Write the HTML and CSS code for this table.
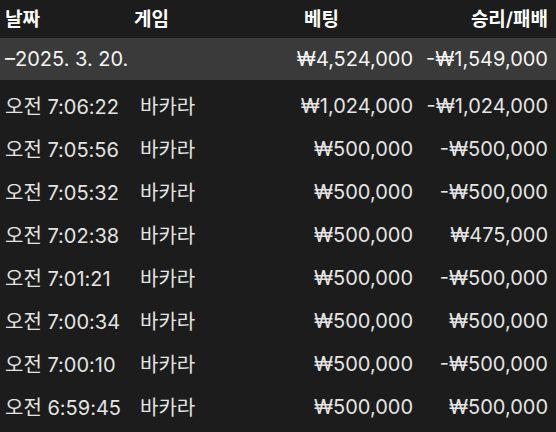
FILE: index.html
```html
<!DOCTYPE html>
<html lang="ko">
<head>
<meta charset="utf-8">
<link rel="stylesheet" href="styles.css">
</head>
<body>
<div class="table">
  <div class="row head">
    <div class="c date">날짜</div>
    <div class="c game">게임</div>
    <div class="c bet">베팅</div>
    <div class="c win">승리/패배</div>
  </div>
  <div class="row summary">
    <div class="c date">–2025. 3. 20.</div>
    <div class="c game"></div>
    <div class="c bet">₩4,524,000</div>
    <div class="c win">-₩1,549,000</div>
  </div>
  <div class="row"><div class="c date">오전 7:06:22</div><div class="c game">바카라</div><div class="c bet">₩1,024,000</div><div class="c win">-₩1,024,000</div></div>
  <div class="row"><div class="c date">오전 7:05:56</div><div class="c game">바카라</div><div class="c bet">₩500,000</div><div class="c win">-₩500,000</div></div>
  <div class="row"><div class="c date">오전 7:05:32</div><div class="c game">바카라</div><div class="c bet">₩500,000</div><div class="c win">-₩500,000</div></div>
  <div class="row"><div class="c date">오전 7:02:38</div><div class="c game">바카라</div><div class="c bet">₩500,000</div><div class="c win">₩475,000</div></div>
  <div class="row"><div class="c date">오전 7:01:21</div><div class="c game">바카라</div><div class="c bet">₩500,000</div><div class="c win">-₩500,000</div></div>
  <div class="row"><div class="c date">오전 7:00:34</div><div class="c game">바카라</div><div class="c bet">₩500,000</div><div class="c win">₩500,000</div></div>
  <div class="row"><div class="c date">오전 7:00:10</div><div class="c game">바카라</div><div class="c bet">₩500,000</div><div class="c win">-₩500,000</div></div>
  <div class="row"><div class="c date">오전 6:59:45</div><div class="c game">바카라</div><div class="c bet">₩500,000</div><div class="c win">₩500,000</div></div>
</div>
</body>
</html>
```
FILE: styles.css
```css
html, body {
  margin: 0;
  padding: 0;
  background: #1c1c1c;
}
body {
  width: 556px;
  height: 432px;
  overflow: hidden;
  font-family: Inter, "Noto Sans CJK KR", sans-serif;
  color: #e4e4e4;
  font-size: 20px;
}
.table {
  display: flex;
  flex-direction: column;
}
.row {
  display: grid;
  grid-template-columns: 135px 1fr 140px 135px;
  align-items: center;
  height: 43px;
  padding: 0 8px 0 5px;
}
.c { white-space: nowrap; }
.bet, .win { text-align: right; }
.head {
  height: 38px;
  padding-bottom: 4px;
  box-sizing: border-box;
  color: #ffffff;
  font-weight: 600;
  font-size: 19px;
}
.head .game { margin-left: -6px; }
.head .bet { text-align: left; padding-left: 31px; }
.summary {
  height: 42px;
  margin-bottom: 4px;
  background: #3a3a3a;
  color: #f4f4f4;
}
```
